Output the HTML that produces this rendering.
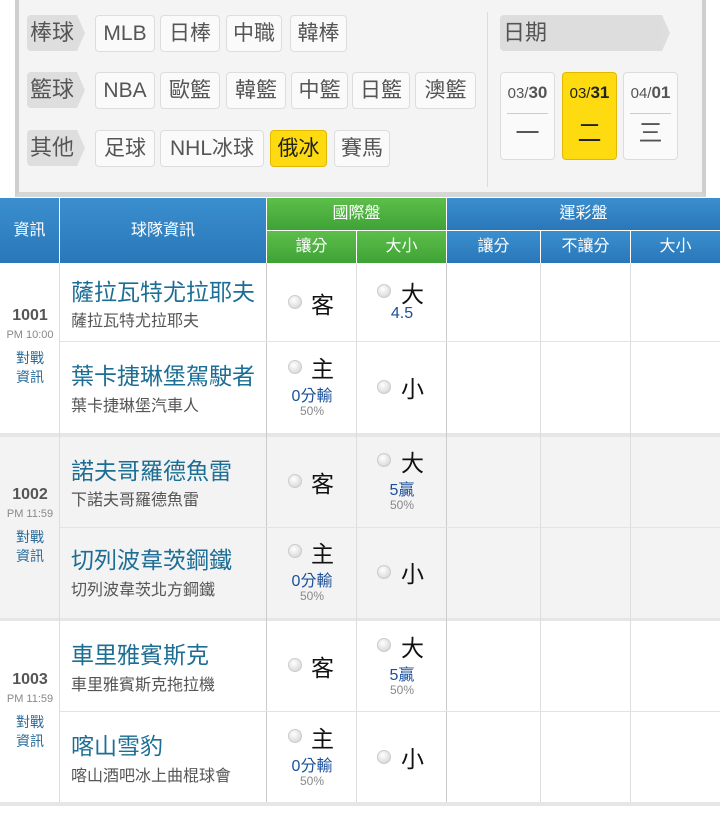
<!DOCTYPE html>
<html><head><meta charset="utf-8"><style>
*{margin:0;padding:0;box-sizing:border-box}
body{width:720px;height:819px;position:relative;background:#fff;font-family:"Liberation Sans","Noto Sans CJK TC",sans-serif;overflow:hidden}
.a{position:absolute}
.panel{left:15px;top:0;width:691px;height:197px;background:#f4f4f4;border-left:4px solid #cfcfcf;border-right:4px solid #cfcfcf;border-bottom:5px solid #d6d6d6}
.tag{position:absolute;height:36px;background:#dedede;color:#555;font-size:22px;line-height:36px;padding-left:3px;border-radius:4px 0 0 4px}
.tag:after{content:"";position:absolute;right:-8px;top:0;border-left:8px solid #dedede;border-top:18px solid transparent;border-bottom:18px solid transparent}
.b{position:absolute;height:37px;background:#fafafa;border:1px solid #ddd;border-radius:4px;color:#555;font-size:21px;line-height:35px;text-align:center}
.b.y{background:#fddb10;border-color:#e0b800;color:#222}
.d{position:absolute;top:72px;width:55px;height:88px;background:#fafafa;border:1px solid #ddd;border-radius:4px;text-align:center;color:#555}
.d .t{font-size:15px;line-height:40px;height:40px}
.d .t b{font-size:17px}
.d .w{margin:0 6px;border-top:1px solid #ccc;font-size:24px;line-height:40px}
.d.y{background:#fddb10;border-color:#e0b800;color:#222}
.hd{color:#fff;font-size:16px;text-align:center;position:absolute}
.blue{background:linear-gradient(#3a8fcf,#2a77b8)}
.green{background:linear-gradient(#5cbf4a,#3fa236)}
.vl{position:absolute;width:1px;background:#ddd}
.hl{position:absolute;height:1px;background:#e3e3e3}
.tn{position:absolute;left:71px;color:#1c6e94;font-size:23px;white-space:nowrap}
.ts{position:absolute;left:71px;color:#555;font-size:16px;white-space:nowrap}
.r{position:absolute;width:14px;height:14px;border-radius:50%;background:radial-gradient(circle at 40% 35%,#fff,#ddd 70%,#bbb);border:1px solid #ccc}
.k{position:absolute;font-size:23px;color:#111}
.n{position:absolute;font-size:16px;color:#1a4f9a;text-align:center}
.p{position:absolute;font-size:12px;color:#888;text-align:center}
.num{position:absolute;left:0;width:60px;text-align:center;color:#555;font-weight:bold;font-size:16px}
.tm{position:absolute;left:0;width:60px;text-align:center;color:#888;font-size:11px}
.vs{position:absolute;left:0;width:60px;text-align:center;color:#2a6d9a;font-size:14px;line-height:19px}
</style></head><body>
<div class="a panel"></div>
<div class="a" style="left:487px;top:12px;width:1px;height:175px;background:#ddd"></div>
<div class="tag" style="left:27px;top:15px;width:50px">棒球</div>
<div class="tag" style="left:27px;top:72px;width:50px">籃球</div>
<div class="tag" style="left:27px;top:130px;width:50px">其他</div>
<div class="b" style="left:95px;top:15px;width:60px">MLB</div>
<div class="b" style="left:160px;top:15px;width:60px">日棒</div>
<div class="b" style="left:226px;top:15px;width:56px">中職</div>
<div class="b" style="left:290px;top:15px;width:57px">韓棒</div>
<div class="b" style="left:95px;top:72px;width:60px">NBA</div>
<div class="b" style="left:160px;top:72px;width:60px">歐籃</div>
<div class="b" style="left:226px;top:72px;width:60px">韓籃</div>
<div class="b" style="left:291px;top:72px;width:57px">中籃</div>
<div class="b" style="left:352px;top:72px;width:58px">日籃</div>
<div class="b" style="left:415px;top:72px;width:61px">澳籃</div>
<div class="b" style="left:95px;top:130px;width:60px">足球</div>
<div class="b" style="left:160px;top:130px;width:104px">NHL冰球</div>
<div class="b y" style="left:270px;top:130px;width:57px">俄冰</div>
<div class="b" style="left:334px;top:130px;width:56px">賽馬</div>
<div class="tag" style="left:500px;top:15px;width:162px;background:#ddd">日期</div>
<div class="d" style="left:500px"><div class="t">03/<b>30</b></div><div class="w">一</div></div>
<div class="d y" style="left:562px"><div class="t">03/<b>31</b></div><div class="w">二</div></div>
<div class="d" style="left:623px"><div class="t">04/<b>01</b></div><div class="w">三</div></div>

<div class="hd blue" style="left:0;top:198px;width:59px;height:65px;line-height:65px">資訊</div>
<div class="hd blue" style="left:60px;top:198px;width:206px;height:65px;line-height:65px">球隊資訊</div>
<div class="hd green" style="left:267px;top:198px;width:179px;height:32px;line-height:32px">國際盤</div>
<div class="hd green" style="left:267px;top:231px;width:89px;height:32px;line-height:32px">讓分</div>
<div class="hd green" style="left:357px;top:231px;width:89px;height:32px;line-height:32px">大小</div>
<div class="hd blue" style="left:447px;top:198px;width:273px;height:32px;line-height:32px">運彩盤</div>
<div class="hd blue" style="left:447px;top:231px;width:93px;height:32px;line-height:32px">讓分</div>
<div class="hd blue" style="left:541px;top:231px;width:89px;height:32px;line-height:32px">不讓分</div>
<div class="hd blue" style="left:631px;top:231px;width:89px;height:32px;line-height:32px">大小</div>

<div class="a" style="left:0;top:433px;width:720px;height:4px;background:#e6e6e6"></div>
<div class="a" style="left:0;top:437px;width:720px;height:181px;background:#f3f3f3"></div>
<div class="a" style="left:0;top:618px;width:720px;height:3px;background:#e6e6e6"></div>
<div class="a" style="left:0;top:802px;width:720px;height:4px;background:#e6e6e6"></div>
<div class="vl" style="left:59px;top:263px;height:539px"></div>
<div class="vl" style="left:266px;top:263px;height:539px;background:#ccc"></div>
<div class="vl" style="left:356px;top:263px;height:539px"></div>
<div class="vl" style="left:446px;top:263px;height:539px;background:#ccc"></div>
<div class="vl" style="left:540px;top:263px;height:539px"></div>
<div class="vl" style="left:630px;top:263px;height:539px"></div>
<div class="hl" style="left:60px;top:341px;width:660px"></div>
<div class="hl" style="left:60px;top:527px;width:660px"></div>
<div class="hl" style="left:60px;top:711px;width:660px"></div>

<!-- game 1 -->
<div class="num" style="top:307px">1001</div><div class="tm" style="top:329px">PM 10:00</div><div class="vs" style="top:349px">對戰<br>資訊</div>
<div class="tn" style="top:273px">薩拉瓦特尤拉耶夫</div><div class="ts" style="top:307px">薩拉瓦特尤拉耶夫</div>
<div class="tn" style="top:357px">葉卡捷琳堡駕駛者</div><div class="ts" style="top:392px">葉卡捷琳堡汽車人</div>
<div class="r" style="left:288px;top:295px"></div><div class="k" style="left:311px;top:286px">客</div>
<div class="r" style="left:377px;top:284px"></div><div class="k" style="left:401px;top:275px">大</div><div class="n" style="left:357px;width:90px;top:305px">4.5</div>
<div class="r" style="left:288px;top:360px"></div><div class="k" style="left:311px;top:350px">主</div><div class="n" style="left:267px;width:90px;top:382px">0分輸</div><div class="p" style="left:267px;width:90px;top:404px">50%</div>
<div class="r" style="left:377px;top:380px"></div><div class="k" style="left:401px;top:370px">小</div>

<!-- game 2 -->
<div class="num" style="top:486px">1002</div><div class="tm" style="top:508px">PM 11:59</div><div class="vs" style="top:528px">對戰<br>資訊</div>
<div class="tn" style="top:452px">諾夫哥羅德魚雷</div><div class="ts" style="top:486px">下諾夫哥羅德魚雷</div>
<div class="tn" style="top:541px">切列波韋茨鋼鐵</div><div class="ts" style="top:576px">切列波韋茨北方鋼鐵</div>
<div class="r" style="left:288px;top:474px"></div><div class="k" style="left:311px;top:465px">客</div>
<div class="r" style="left:377px;top:453px"></div><div class="k" style="left:401px;top:444px">大</div><div class="n" style="left:357px;width:90px;top:476px">5贏</div><div class="p" style="left:357px;width:90px;top:498px">50%</div>
<div class="r" style="left:288px;top:544px"></div><div class="k" style="left:311px;top:535px">主</div><div class="n" style="left:267px;width:90px;top:567px">0分輸</div><div class="p" style="left:267px;width:90px;top:589px">50%</div>
<div class="r" style="left:377px;top:565px"></div><div class="k" style="left:401px;top:555px">小</div>

<!-- game 3 -->
<div class="num" style="top:671px">1003</div><div class="tm" style="top:693px">PM 11:59</div><div class="vs" style="top:713px">對戰<br>資訊</div>
<div class="tn" style="top:636px">車里雅賓斯克</div><div class="ts" style="top:671px">車里雅賓斯克拖拉機</div>
<div class="tn" style="top:727px">喀山雪豹</div><div class="ts" style="top:762px">喀山酒吧冰上曲棍球會</div>
<div class="r" style="left:288px;top:658px"></div><div class="k" style="left:311px;top:649px">客</div>
<div class="r" style="left:377px;top:638px"></div><div class="k" style="left:401px;top:629px">大</div><div class="n" style="left:357px;width:90px;top:661px">5贏</div><div class="p" style="left:357px;width:90px;top:683px">50%</div>
<div class="r" style="left:288px;top:729px"></div><div class="k" style="left:311px;top:720px">主</div><div class="n" style="left:267px;width:90px;top:752px">0分輸</div><div class="p" style="left:267px;width:90px;top:774px">50%</div>
<div class="r" style="left:377px;top:750px"></div><div class="k" style="left:401px;top:740px">小</div>
</body></html>
